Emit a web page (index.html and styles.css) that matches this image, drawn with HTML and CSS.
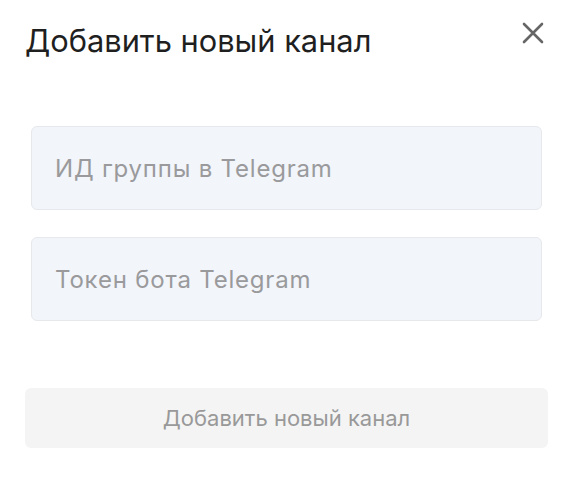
FILE: index.html
```html
<!DOCTYPE html>
<html lang="ru">
<head>
  <meta charset="UTF-8">
  <meta name="viewport" content="width=device-width, initial-scale=1.0">
  <title>Добавить новый канал</title>
  <link rel="stylesheet" href="styles.css">
</head>
<body>
  <div class="modal">
    <div class="modal-header">
      <h2>Добавить новый канал</h2>
      <button class="close-btn" aria-label="Закрыть">
        <svg width="24" height="24" viewBox="0 0 24 24">
          <path d="M3 3 L21 21 M21 3 L3 21" stroke="#666" stroke-width="2.6" stroke-linecap="round" fill="none"/>
        </svg>
      </button>
    </div>

    <div class="fields">
      <input type="text" class="field" placeholder="ИД группы в Telegram">
      <input type="text" class="field" placeholder="Токен бота Telegram">
    </div>

    <button class="submit-btn" disabled>Добавить новый канал</button>
  </div>
</body>
</html>
```

FILE: styles.css
```css
body {
  font-family: 'Inter', 'Noto Sans', sans-serif;
  background-color: #ffffff;
  margin: 0;
  padding: 0;
  color: #222;
}

.modal {
  padding: 20px 24px 0 25px;
}

.modal-header {
  display: flex;
  justify-content: space-between;
  align-items: flex-start;
}

h2 {
  margin: 0;
  font-size: 30.8px;
  font-weight: 400;
  line-height: 42px;
  color: #1f1f1f;
}

.close-btn {
  background: none;
  border: none;
  padding: 0;
  margin: -1px 1px 0 0;
  cursor: pointer;
  width: 28px;
  height: 28px;
  display: flex;
  align-items: center;
  justify-content: center;
}

.fields {
  display: flex;
  flex-direction: column;
  gap: 27px;
  margin: 64px 6px 0 6px;
}

.field {
  box-sizing: border-box;
  width: 100%;
  height: 84px;
  padding: 0 23px;
  font-family: 'Inter', sans-serif;
  font-size: 24px;
  letter-spacing: 0.8px;
  background-color: #f2f5fa;
  border: 1px solid #e6e8ec;
  border-radius: 6px;
  color: #333;
}

.field::placeholder {
  color: #9a9a9c;
}

.submit-btn {
  display: block;
  width: 100%;
  height: 60px;
  margin-top: 67px;
  background-color: #f4f4f4;
  border: none;
  border-radius: 6px;
  font-family: 'Inter', sans-serif;
  font-size: 22px;
  color: #999;
  cursor: default;
}
```
